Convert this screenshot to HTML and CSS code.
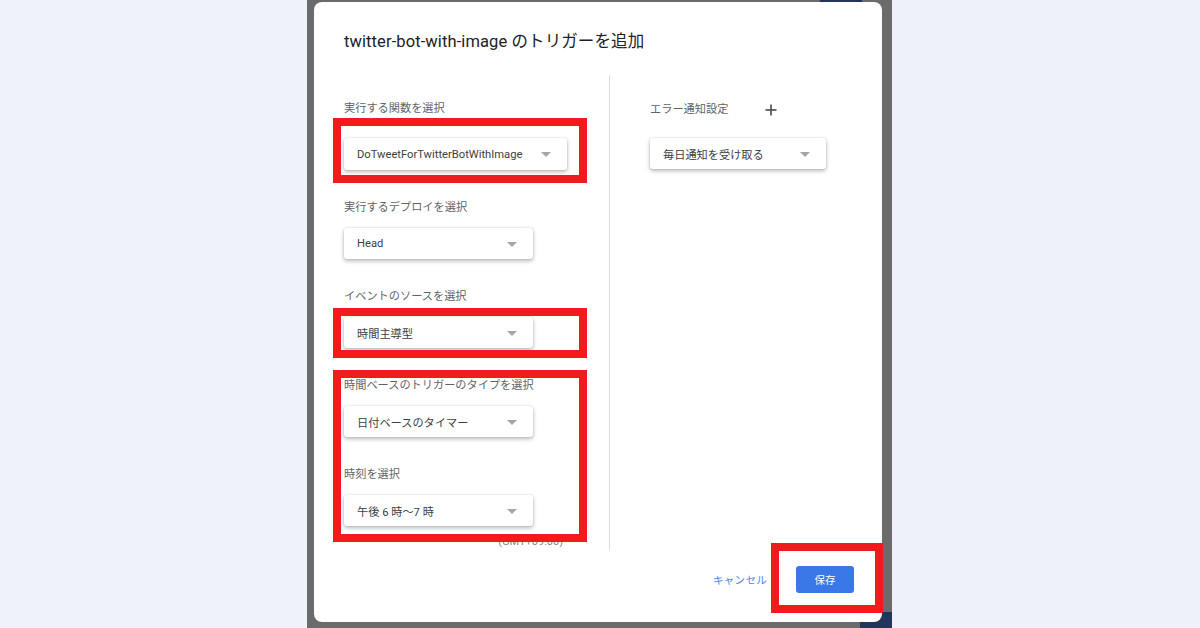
FILE: index.html
```html
<!DOCTYPE html>
<html lang="ja">
<head>
<meta charset="utf-8">
<title>トリガーを追加</title>
<link rel="stylesheet" href="styles.css">
</head>
<body>
<div class="page">
  <div class="side side-left"></div>
  <div class="band">
    <div class="navy navy-top"></div>
    <div class="navy navy-bottom"></div>
    <div class="dialog">
      <h1 class="title">twitter-bot-with-image のトリガーを追加</h1>
      <div class="body">
        <div class="col-left">
          <div class="label label-first">実行する関数を選択</div>
          <div class="select select-wide"><span>DoTweetForTwitterBotWithImage</span><i class="arrow"></i></div>
          <div class="label">実行するデプロイを選択</div>
          <div class="select"><span>Head</span><i class="arrow"></i></div>
          <div class="label">イベントのソースを選択</div>
          <div class="select"><span>時間主導型</span><i class="arrow"></i></div>
          <div class="label">時間ベースのトリガーのタイプを選択</div>
          <div class="select"><span>日付ベースのタイマー</span><i class="arrow"></i></div>
          <div class="label">時刻を選択</div>
          <div class="select select-last"><span>午後 6 時～7 時</span><i class="arrow"></i></div>
          <div class="tz">(GMT+09:00)</div>
        </div>
        <div class="divider"></div>
        <div class="col-right">
          <div class="label-row">
            <div class="label">エラー通知設定</div>
            <svg class="plus" width="12" height="12" viewBox="0 0 12 12"><path d="M6 0.5V11.5M0.5 6H11.5" stroke="#3c4043" stroke-width="1.5" fill="none"/></svg>
          </div>
          <div class="select select-notify"><span>毎日通知を受け取る</span><i class="arrow"></i></div>
        </div>
      </div>
      <div class="footer">
        <span class="cancel">キャンセル</span>
        <span class="save">保存</span>
      </div>
      <div class="mark mark-1"></div>
      <div class="mark mark-2"></div>
      <div class="mark mark-3"></div>
      <div class="mark mark-4"></div>
    </div>
  </div>
  <div class="side side-right"></div>
</div>
</body>
</html>
```
FILE: styles.css
```css
* { box-sizing: border-box; }
html, body { margin: 0; padding: 0; }
body {
  width: 1200px;
  height: 628px;
  overflow: hidden;
  font-family: "Roboto", "Noto Sans CJK JP", sans-serif;
}
.page {
  display: flex;
  width: 1200px;
  height: 628px;
}
.side-left { width: 307px; background: #eff2f8; }
.side-right { flex: 1; background: #eef1f7; }
.band {
  position: relative;
  width: 585px;
  background: #6b6b6b;
  padding: 2px 0 0 7px;
}
.navy { position: absolute; background: #22365c; }
.navy-top { left: 513px; top: 0; width: 42px; height: 2px; }
.navy-bottom { left: 553px; top: 612px; width: 32px; height: 16px; }

.dialog {
  position: relative;
  width: 568px;
  height: 620px;
  background: #fff;
  border-radius: 8px;
  padding: 28px 28px 0 30px;
  display: flex;
  flex-direction: column;
}
.title {
  margin: 0;
  font-size: 16.5px;
  line-height: 24px;
  font-weight: 400;
  color: #202124;
  letter-spacing: 0.1px;
}
.body {
  display: flex;
  margin-top: 21px;
  height: 475px;
}
.col-left {
  width: 265px;
  padding-top: 26px;
  display: flex;
  flex-direction: column;
  align-items: flex-start;
}
.divider { width: 1px; background: #dadce0; }
.col-right {
  flex: 1;
  padding: 27px 0 0 40px;
  display: flex;
  flex-direction: column;
  align-items: flex-start;
}
.label {
  font-size: 11.2px;
  line-height: 16px;
  color: #5f6368;
  margin-bottom: 12px;
  white-space: nowrap;
}
.label-first { margin-bottom: 21px; }
.select {
  position: relative;
  width: 189px;
  height: 31px;
  background: #fff;
  border-radius: 3px;
  box-shadow: 0 2px 4px rgba(0,0,0,0.28), 0 0 2px rgba(0,0,0,0.14);
  display: flex;
  align-items: center;
  padding-left: 13px;
  font-size: 11.2px;
  color: #3c4043;
  margin-bottom: 30px;
  white-space: nowrap;
}
.select-wide { width: 223px; height: 32px; }
.select-last { margin-bottom: 9px; }
.arrow {
  position: absolute;
  right: 16px;
  top: 50%;
  margin-top: -2px;
  width: 0;
  height: 0;
  border-left: 5px solid transparent;
  border-right: 5px solid transparent;
  border-top: 5px solid #a3a6aa;
}
.tz {
  align-self: flex-end;
  margin-right: 46px;
  font-size: 11px;
  line-height: 14px;
  color: #80868b;
}
.label-row {
  display: flex;
  align-items: center;
  gap: 37px;
  margin-bottom: 20px;
}
.label-row .label { margin-bottom: 0; }
.plus { display: block; }
.select-notify { width: 176px; }
.footer {
  display: flex;
  justify-content: flex-end;
  align-items: center;
  gap: 29px;
  margin-top: 16px;
}
.cancel {
  font-size: 10.5px;
  color: #4a86e8;
  letter-spacing: 0.3px;
}
.save {
  width: 58px;
  height: 27px;
  border-radius: 3px;
  background: #3b78e7;
  color: #fff;
  font-size: 10.5px;
  display: flex;
  align-items: center;
  justify-content: center;
}
.mark {
  position: absolute;
  border: 8px solid #f21b1b;
}
.mark-1 { left: 19px; top: 116px; width: 254px; height: 65px; }
.mark-2 { left: 19px; top: 306px; width: 254px; height: 50px; }
.mark-3 { left: 19px; top: 368px; width: 254px; height: 172px; }
.mark-4 { left: 457px; top: 541px; width: 112px; height: 70px; }
```
